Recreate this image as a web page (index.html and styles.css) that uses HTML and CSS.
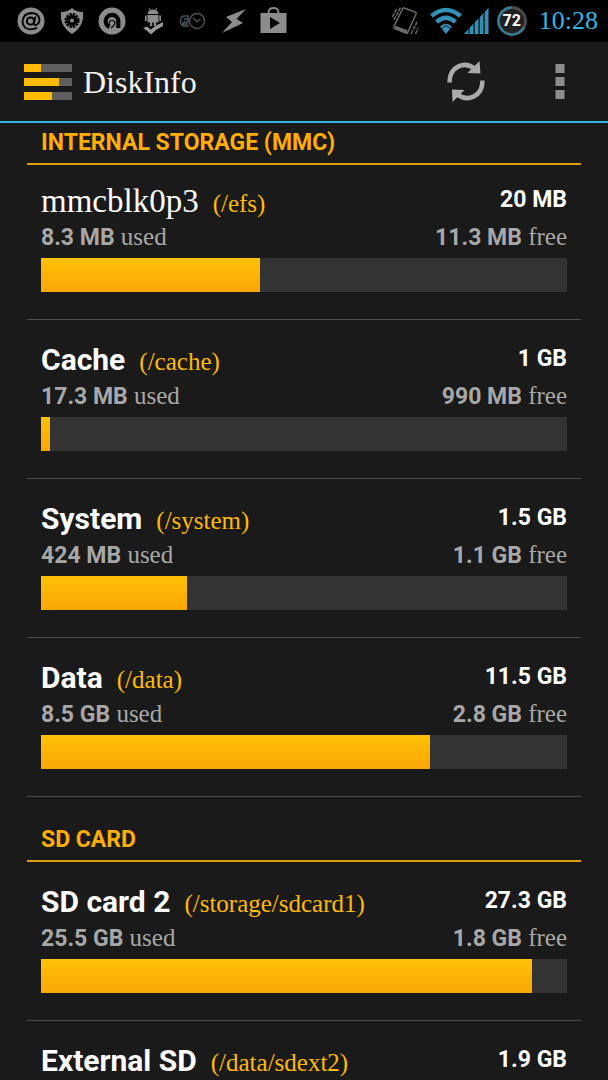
FILE: index.html
```html
<!DOCTYPE html>
<html lang="en">
<head>
<meta charset="utf-8">
<meta name="viewport" content="width=device-width, initial-scale=1">
<title>DiskInfo</title>
<link rel="stylesheet" href="styles.css">
</head>
<body>
<div class="status">
  <div class="status-icons">
    <svg width="28" height="28" viewBox="0 0 28 28"><circle cx="14" cy="14" r="13.5" fill="#8c8c8c"/><circle cx="13.5" cy="14" r="3.6" fill="none" stroke="#000" stroke-width="2"/><path d="M18.5 9.5L17 16.5Q17 18.5 19 18Q22.500 16.500 22.500 12.500Q21.500 6 14.500 6Q6 6.500 5.500 14.500Q6 22 13.500 22.300Q17.500 22.300 20 20.500" fill="none" stroke="#000" stroke-width="1.8"/></svg>
    <svg width="28" height="28" viewBox="-2 0 28 28"><path d="M12 1Q16 5 23 5Q24.500 19 12 27Q-.5 19 1 5Q8 5 12 1Z" fill="#8c8c8c"/><circle cx="12" cy="13.500" r="6" fill="none" stroke="#000" stroke-width="3" stroke-dasharray="2.200 .94"/><circle cx="12" cy="13.500" r="3.700" fill="none" stroke="#000" stroke-width="3.500"/></svg>
    <svg width="28" height="28" viewBox="0 0 28 28"><circle cx="14" cy="14" r="13.500" fill="#8c8c8c"/><path d="M11.500 20A6.300 6.300 0 1 1 20.300 14V21" fill="none" stroke="#000" stroke-width="4.200"/><path d="M12 18.500A3 3 0 1 1 17 15.500Q16.500 19 13 21" fill="none" stroke="#000" stroke-width="1.200"/></svg>
    <svg width="28" height="28" viewBox="-3 0 28 28"><path d="M5.500 7Q6 2.500 11 2.500T16.500 7ZM5.500 8H16.500V15.500H14V19H11.800V15.500H10.200V19H8V15.500H5.500ZM3 8.500H4.700V14H3ZM17.300 8.500H19V14H17.300Z" fill="#8c8c8c"/><path d="M7 .8L8.500 3.500M15 .8L13.500 3.500" stroke="#8c8c8c"/><path d="M1 21L5 19.500L8.500 22.500Q14 18 21 15V19Q14 22 9 27.500Q6 24 1 21Z" fill="#9a9a9a"/></svg>
    <svg width="28" height="28" viewBox="0 0 28 28"><g fill="none" stroke="#4b5054" stroke-width="1.500"><circle cx="18" cy="14" r="7.500"/><path d="M14 11L18 14.500L21.500 12"/><path d="M10 9H5Q1.500 9.500 1.500 14T5 19H10M9 10V15H5M5 12H9M4 15V17H9" stroke="#46545c"/></g></svg>
    <svg width="28" height="28" viewBox="-1 0 28 28"><path d="M25 2L5 10L11 15L1 26L22 16L15.500 12Z" fill="#8c8c8c"/></svg>
    <svg width="28" height="28" viewBox="0 0 28 28"><path d="M8.500 7V5Q9 1 13.500 1T18.500 5V7" fill="none" stroke="#8c8c8c" stroke-width="1.800"/><path d="M.5 6H26.500V26H.5Z" fill="#8c8c8c"/><path d="M10 10L20 16L10 22Z" fill="#000"/></svg>
  </div>
  <div class="status-system">
    <svg class="vibrate" width="26" height="30" viewBox="0 0 26 30"><g fill="none" stroke="#6a6a6a"><path d="M12 2L23 6Q24.500 6.500 24 8L16 26Q15.500 27.500 14 27L3 22.500Q1.500 22 2 20.500L10.500 3Q11 1.500 12 2Z" stroke-width="1.500"/><path d="M.5 11L4.500 3M2 14L8.500 1.500M19 28L25 16M23.500 28L26 22" stroke-width="1.500" stroke-dasharray="4 1"/><path d="M3 21.500L15 26" stroke-width="3.500"/></g></svg>
    <svg width="32" height="28" viewBox="0 0 32 28"><g fill="none" stroke="#3490b4" stroke-width="4.500"><path d="M1.500 9Q16 -3 30.500 9"/><path d="M6.500 15Q16 6.500 25.500 15"/></g><path d="M10 19.500Q16 14 22 19.500L16 27Z" fill="#3490b4"/><path d="M11.500 21.500L16 18.500L20.500 21.500" fill="none" stroke="#000" stroke-width=".8"/></svg>
    <svg width="25" height="28" viewBox="0 0 25 28"><path d="M0 27L4.500 22V27ZM5.500 21L9.500 16.500V27H5.500ZM10.700 15.500L14.500 11.500V27H10.700ZM15.700 10.500L19.500 6V27H15.700ZM20.700 5L24.500 .5V27H20.700Z" fill="#3490b4"/></svg>
    <div class="battery">
      <svg width="30" height="30" viewBox="0 0 30 30"><circle cx="15" cy="15" r="13.500" fill="#202020" stroke="#4a4a4a" stroke-width="3"/><path d="M27 21A13.500 13.500 0 1 1 15 1.500" fill="none" stroke="#347f9d" stroke-width="2"/></svg>
      <span class="battery-level">72</span>
    </div>
    <time class="time">10:28</time>
  </div>
</div>

<header class="appbar">
  <svg class="logo" width="48" height="36" viewBox="0 0 48 36"><path d="M0 0H48V8H0ZM0 14H48V22H0ZM0 28H48V36H0Z" fill="#606060"/><path d="M0 0H17V8H0ZM0 14H35V22H0ZM0 28H28V36H0Z" fill="#ffbb05"/></svg>
  <h1 class="title">DiskInfo</h1>
  <button class="action" aria-label="Refresh"><svg width="38" height="42" viewBox="0 0 38 42"><g fill="none" stroke="#aaa" stroke-width="4.500"><path d="M2.500 21.500C2.500 5 18 -.5 28 8"/><path d="M35.500 19.500C35.500 36 20 41.500 10 33"/></g><path d="M32.500 0L33.500 12.500L20.500 12ZM5.500 41L5 28.500L17.500 29Z" fill="#aaa"/></svg></button>
  <button class="action action-more" aria-label="More options"><svg width="10" height="35" viewBox="0 0 10 35"><path d="M.5 0H9.500V9H.5ZM.5 13H9.500V22H.5ZM.5 26H9.500V35H.5Z" fill="#8d8d8d"/></svg></button>
</header>

<main class="list">
  <section class="group group-pinned">
    <h2 class="group-title">INTERNAL STORAGE (MMC)</h2>
    <article class="disk">
      <div class="head"><h3 class="name name-device">mmcblk0p3</h3><span class="path">(/efs)</span><b class="total">20 MB</b></div>
      <div class="usage"><span><b>8.3 MB</b> used</span><span><b>11.3 MB</b> free</span></div>
      <div class="bar"><div class="fill" style="width:41.7%"></div></div>
    </article>
    <article class="disk">
      <div class="head"><h3 class="name">Cache</h3><span class="path">(/cache)</span><b class="total">1 GB</b></div>
      <div class="usage"><span><b>17.3 MB</b> used</span><span><b>990 MB</b> free</span></div>
      <div class="bar"><div class="fill" style="width:1.8%"></div></div>
    </article>
    <article class="disk">
      <div class="head"><h3 class="name">System</h3><span class="path">(/system)</span><b class="total">1.5 GB</b></div>
      <div class="usage"><span><b>424 MB</b> used</span><span><b>1.1 GB</b> free</span></div>
      <div class="bar"><div class="fill" style="width:27.7%"></div></div>
    </article>
    <article class="disk">
      <div class="head"><h3 class="name">Data</h3><span class="path">(/data)</span><b class="total">11.5 GB</b></div>
      <div class="usage"><span><b>8.5 GB</b> used</span><span><b>2.8 GB</b> free</span></div>
      <div class="bar"><div class="fill" style="width:74%"></div></div>
    </article>
  </section>
  <section class="group">
    <h2 class="group-title">SD CARD</h2>
    <article class="disk">
      <div class="head"><h3 class="name">SD card 2</h3><span class="path">(/storage/sdcard1)</span><b class="total">27.3 GB</b></div>
      <div class="usage"><span><b>25.5 GB</b> used</span><span><b>1.8 GB</b> free</span></div>
      <div class="bar"><div class="fill" style="width:93.3%"></div></div>
    </article>
    <article class="disk">
      <div class="head"><h3 class="name">External SD</h3><span class="path">(/data/sdext2)</span><b class="total">1.9 GB</b></div>
    </article>
  </section>
</main>
</body>
</html>
```
FILE: styles.css
```css
* { box-sizing: border-box; }
body {
  margin: 0;
  height: 100vh;
  display: flex;
  flex-direction: column;
  background: #1a1a1a;
  color: #fff;
  font-family: "Liberation Serif", serif;
}
h1, h2, h3 { margin: 0; font-weight: 400; }
svg { display: block; flex: none; }

.status {
  flex: none;
  height: 42px;
  padding: 0 10px 0 17px;
  display: flex;
  align-items: center;
  justify-content: space-between;
  background: #000;
}
.status-icons {
  width: 271px;
  display: flex;
  align-items: center;
  justify-content: space-between;
}
.status-system { display: flex; align-items: center; gap: 2px; }
.vibrate { margin-right: 10px; }
.battery {
  position: relative;
  margin: 0 10px 0 6px;
}
.battery-level {
  position: absolute;
  inset: 0;
  text-align: center;
  font: 700 16px/30px Roboto, sans-serif;
}
.time { color: #33b5e5; font-size: 26px; line-height: 42px; }

.appbar {
  flex: none;
  height: 81px;
  padding: 0 32px 0 24px;
  display: flex;
  align-items: center;
  border-bottom: 2px solid #33b5e5;
}
.title {
  flex: 1;
  margin-left: 11px;
  font-size: 32px;
  line-height: 40px;
  color: #f2f2f2;
}
.action {
  display: flex;
  align-items: center;
  justify-content: center;
  width: 56px;
  height: 56px;
  padding: 0;
  border: 0;
  background: none;
}
.action-more { width: 32px; margin-left: 50px; }

.list {
  flex: 1;
  min-height: 0;
  padding: 0 27px;
  overflow-y: auto;
  scrollbar-width: none;
}
.group-title {
  padding: 29px 14px 6px;
  border-bottom: 2px solid #e09c12;
  color: #ffae07;
  font: 700 23px/28px Roboto, sans-serif;
}
.group-pinned .group-title { padding-top: 6px; }
.disk {
  padding: 18px 14px 27px;
  border-bottom: 1px solid #4a4c4c;
}
.group-pinned .group-title + .disk { padding-top: 14px; }
.head { display: flex; align-items: baseline; height: 44px; }
.name { font: 700 30px/44px Roboto, sans-serif; }
.name-device { font: 400 33px/44px "Liberation Serif", serif; }
.path {
  margin-left: 14px;
  color: #ffbb05;
  font-size: 25px;
  line-height: 28px;
}
.total {
  align-self: flex-start;
  margin-left: auto;
  font: 700 23px/42px Roboto, sans-serif;
}
.usage {
  display: flex;
  justify-content: space-between;
  height: 28px;
  color: #a8a8a8;
  font-size: 25px;
  line-height: 28px;
}
.usage b { font: 700 23px/28px Roboto, sans-serif; }
.bar { height: 34px; margin-top: 7px; background: #333; }
.fill { height: 100%; background: linear-gradient(#ffc107, #fba506); }
```
